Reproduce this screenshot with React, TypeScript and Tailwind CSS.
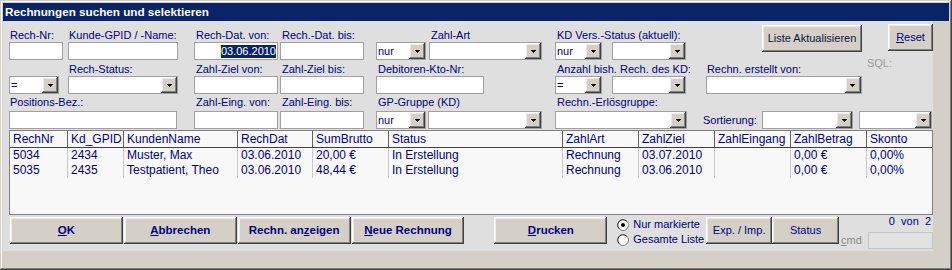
import { ReactNode } from "react";

const font = "font-['Liberation_Sans',Arial,sans-serif]";
const raised =
  "bg-[#d4d0c8] shadow-[inset_-1px_-1px_#404040,inset_1px_1px_#ffffff,inset_-2px_-2px_#808080,inset_2px_2px_#ececec]";
const lbl = "h-[13px] text-[11px] leading-[13px] text-[#000080] whitespace-nowrap";

const Arrow = () => (
  <svg width="5" height="3" viewBox="0 0 5 3" shapeRendering="crispEdges">
    <rect x="0" y="0" width="5" height="1" fill="#000" />
    <rect x="1" y="1" width="3" height="1" fill="#000" />
    <rect x="2" y="2" width="1" height="1" fill="#000" />
  </svg>
);

const TextBox = ({ className = "", children }: { className?: string; children?: ReactNode }) => (
  <div className={`${className} h-[18px] bg-white border border-[#a0a0a0]`}>{children}</div>
);

const Combo = ({ className = "", value }: { className?: string; value?: string }) => (
  <div className={`${className} h-[18px] flex bg-white border border-[#a0a0a0]`}>
    <div className="flex-1 pl-[1px] text-[11px] leading-[16px] text-[#000080]">{value}</div>
    <div className={`${raised} w-[16px] h-full flex items-center justify-center`}>
      <Arrow />
    </div>
  </div>
);

const Field = ({
  label,
  className = "",
  labelClass = "pl-[1px]",
  children,
}: {
  label?: string;
  className?: string;
  labelClass?: string;
  children: ReactNode;
}) => (
  <div className={`${className} flex flex-col`}>
    <div className={`${lbl} ${labelClass}`}>{label}</div>
    {children}
  </div>
);

const Button = ({ className = "", children }: { className?: string; children: ReactNode }) => (
  <div className={`${raised} ${className} h-[27px] flex items-center justify-center text-[#000080]`}>
    {children}
  </div>
);

const Radio = ({ checked }: { checked?: boolean }) => (
  <svg width="12" height="12" viewBox="0 0 12 12">
    <circle cx="6" cy="6" r="5.5" fill="#ffffff" stroke="#808080" />
    <path d="M2.3 9.7 A5 5 0 0 1 9.7 2.3" fill="none" stroke="#404040" />
    {checked && <circle cx="6" cy="6" r="2" fill="#000" />}
  </svg>
);

const cols = [
  { name: "RechNr", w: "w-[58px] border-r" },
  { name: "Kd_GPID", w: "w-[56px] border-r" },
  { name: "KundenName", w: "w-[114px] border-r" },
  { name: "RechDat", w: "w-[75px] border-r" },
  { name: "SumBrutto", w: "w-[76px] border-r" },
  { name: "Status", w: "w-[174px] border-r" },
  { name: "ZahlArt", w: "w-[76px] border-r" },
  { name: "ZahlZiel", w: "w-[76px] border-r" },
  { name: "ZahlEingang", w: "w-[76px] border-r" },
  { name: "ZahlBetrag", w: "w-[76px] border-r" },
  { name: "Skonto", w: "w-[65px]" },
];

const rows = [
  ["5034", "2434", "Muster, Max", "03.06.2010", "20,00 €", "In Erstellung", "Rechnung", "03.07.2010", "", "0,00 €", "0,00%"],
  ["5035", "2435", "Testpatient, Theo", "03.06.2010", "48,44 €", "In Erstellung", "Rechnung", "03.06.2010", "", "0,00 €", "0,00%"],
];

export default function App() {
  return (
    <div
      className={`${font} w-[952px] h-[270px] p-[3px] bg-[#d4d0c8] shadow-[inset_-1px_-1px_#404040,inset_1px_1px_#d4d0c8,inset_-2px_-2px_#808080,inset_2px_2px_#ffffff] flex flex-col`}
    >
      <div className="h-[18px] bg-[#0a246a] text-white font-bold text-[11.7px] flex items-center pl-[2px]">
        Rechnungen suchen und selektieren
      </div>
      <div className="flex">
        <div className="w-[930px] h-[230px] bg-[#dfdfdf] flex flex-col">
          {/* Zeile 1 */}
          <div className="flex items-start">
            <Field label="Rech-Nr:" className="ml-[6px] w-[54px] pt-[8px]">
              <TextBox />
            </Field>
            <Field label="Kunde-GPID / -Name:" className="ml-[5px] w-[110px] pt-[8px]">
              <TextBox />
            </Field>
            <Field label="Rech-Dat. von:" labelClass="pl-[2px]" className="ml-[16px] w-[84px] pt-[8px]">
              <TextBox className="flex items-center justify-end pr-[1px]">
                <span className="border-l border-[#ffff00] bg-[#0a246a] text-white text-[11px] leading-[13px]">
                  03.06.2010
                </span>
              </TextBox>
            </Field>
            <Field label="Rech.-Dat. bis:" labelClass="pl-[2px]" className="ml-[2px] w-[84px] pt-[8px]">
              <TextBox />
            </Field>
            <Field label="Zahl-Art" labelClass="pl-[55px]" className="ml-[12px] pt-[8px]">
              <div className="flex">
                <Combo className="w-[50px]" value="nur" />
                <Combo className="ml-[3px] w-[113px]" />
              </div>
            </Field>
            <Field label="KD Vers.-Status (aktuell):" labelClass="pl-[2px]" className="ml-[13px] pt-[8px]">
              <div className="flex">
                <Combo className="w-[47px]" value="nur" />
                <Combo className="ml-[10px] w-[74px]" />
              </div>
            </Field>
            <Button className="ml-[76px] mt-[4px] w-[100px] text-[11px] !text-[#101038]">Liste Aktualisieren</Button>
            <Button className="ml-[26px] mt-[3px] w-[45px] text-[11px]">
              <span>
                <span className="underline">R</span>eset
              </span>
            </Button>
          </div>

          {/* Zeile 2 */}
          <div className="flex items-start mt-[3px]">
            <Field className="ml-[6px] w-[50px]">
              <Combo value="=" />
            </Field>
            <Field label="Rech-Status:" className="ml-[9px] w-[110px]">
              <Combo />
            </Field>
            <Field label="Zahl-Ziel von:" labelClass="pl-[2px]" className="ml-[16px] w-[84px]">
              <TextBox />
            </Field>
            <Field label="Zahl-Ziel bis:" labelClass="pl-[2px]" className="ml-[2px] w-[84px]">
              <TextBox />
            </Field>
            <Field label="Debitoren-Kto-Nr:" labelClass="pl-[2px]" className="ml-[12px] w-[108px]">
              <TextBox />
            </Field>
            <Field label="Anzahl bish. Rech. des KD:" labelClass="pl-[2px]" className="ml-[71px]">
              <div className="flex">
                <Combo className="w-[47px]" value="=" />
                <Combo className="ml-[10px] w-[74px]" />
              </div>
            </Field>
            <Field label="Rechn. erstellt von:" className="ml-[15px] w-[156px]">
              <Combo />
            </Field>
            <div className="ml-[5px] -mt-[6px] text-[11px] leading-[13px] text-[#9a9a9a]">SQL:</div>
          </div>

          {/* Zeile 3 */}
          <div className="flex items-start mt-[2px]">
            <Field label="Positions-Bez.:" className="ml-[6px] w-[168px]">
              <div className="h-[2px]" />
              <TextBox />
            </Field>
            <Field label="Zahl-Eing. von:" labelClass="pl-[2px]" className="ml-[17px] w-[84px]">
              <div className="h-[2px]" />
              <TextBox />
            </Field>
            <Field label="Zahl-Eing. bis:" labelClass="pl-[2px]" className="ml-[2px] w-[84px]">
              <div className="h-[2px]" />
              <TextBox />
            </Field>
            <Field label="GP-Gruppe (KD)" labelClass="pl-[2px]" className="ml-[12px]">
              <div className="h-[2px]" />
              <div className="flex">
                <Combo className="w-[50px]" value="nur" />
                <Combo className="ml-[2px] w-[114px]" />
              </div>
            </Field>
            <Field label="Rechn.-Erlösgruppe:" labelClass="pl-[2px]" className="ml-[13px] w-[132px]">
              <div className="h-[2px]" />
              <Combo />
            </Field>
            <Field className="ml-[15px]">
              <div className="h-[2px]" />
              <div className="flex">
                <div className="w-[60px] pl-[1px] text-[11px] leading-[18px] text-[#000080]">Sortierung:</div>
                <Combo className="w-[91px]" />
                <Combo className="ml-[6px] w-[73px]" />
              </div>
            </Field>
          </div>

          {/* Liste */}
          <div className="mt-[1px] ml-[6px] w-[924px] h-[85px] bg-[#f8f8f8] border border-[#808080] text-[12px] text-[#000080]">
            <div className="flex h-[17px] border-b border-[#404040]">
              {cols.map((c) => (
                <div key={c.name} className={`${c.w} border-[#606060] pl-[3px] leading-[16px] whitespace-nowrap overflow-hidden`}>
                  {c.name}
                </div>
              ))}
            </div>
            {rows.map((r) => (
              <div key={r[0]} className="flex h-[15px]">
                {r.map((v, i) => (
                  <div key={i} className={`${cols[i].w} border-[#c8c8c8] pl-[3px] leading-[15px] whitespace-nowrap overflow-hidden`}>
                    {v}
                  </div>
                ))}
              </div>
            ))}
          </div>

          {/* Schaltflächen */}
          <div className="flex items-start mt-[2px]">
            <Button className="ml-[7px] w-[113px] font-bold text-[11.5px]">
              <span>
                <span className="underline">O</span>K
              </span>
            </Button>
            <Button className="ml-[1px] w-[113px] font-bold text-[11.5px]">
              <span>
                <span className="underline">A</span>bbrechen
              </span>
            </Button>
            <Button className="ml-[1px] w-[113px] font-bold text-[11.5px]">
              <span>
                Rechn. an<span className="underline">z</span>eigen
              </span>
            </Button>
            <Button className="ml-[1px] w-[113px] font-bold text-[11.5px]">
              <span>
                <span className="underline">N</span>eue Rechnung
              </span>
            </Button>
            <Button className="ml-[30px] w-[113px] font-bold text-[11.5px]">
              <span>
                <span className="underline">D</span>rucken
              </span>
            </Button>
            <div className="ml-[5px] w-[94px] pl-[5px] flex flex-col text-[11px] text-[#000080]">
              <div className="h-[15px] flex items-center gap-[4px]">
                <Radio checked />
                <span className="leading-[15px]">Nur markierte</span>
              </div>
              <div className="h-[15px] flex items-center gap-[4px]">
                <Radio />
                <span className="leading-[15px]">Gesamte Liste</span>
              </div>
            </div>
            <Button className="w-[66px] text-[11px]">Exp. / Imp.</Button>
            <Button className="w-[67px] text-[11px]">Status</Button>
            <div className="ml-[2px] w-[92px] flex flex-col">
              <div className="-mt-[2px] h-[13px] pr-[2px] text-right text-[11px] leading-[13px] text-[#000080] whitespace-pre">
                0  von  2
              </div>
              <div className="mt-[4px] flex items-center">
                <div className="w-[27px] text-[11px] leading-[17px] text-[#8a8a8a]">
                  <span className="underline">c</span>md
                </div>
                <div className="w-[65px] h-[17px] bg-[#e2e2e2] border border-[#c4c4c4]" />
              </div>
            </div>
          </div>
        </div>
      </div>
    </div>
  );
}
